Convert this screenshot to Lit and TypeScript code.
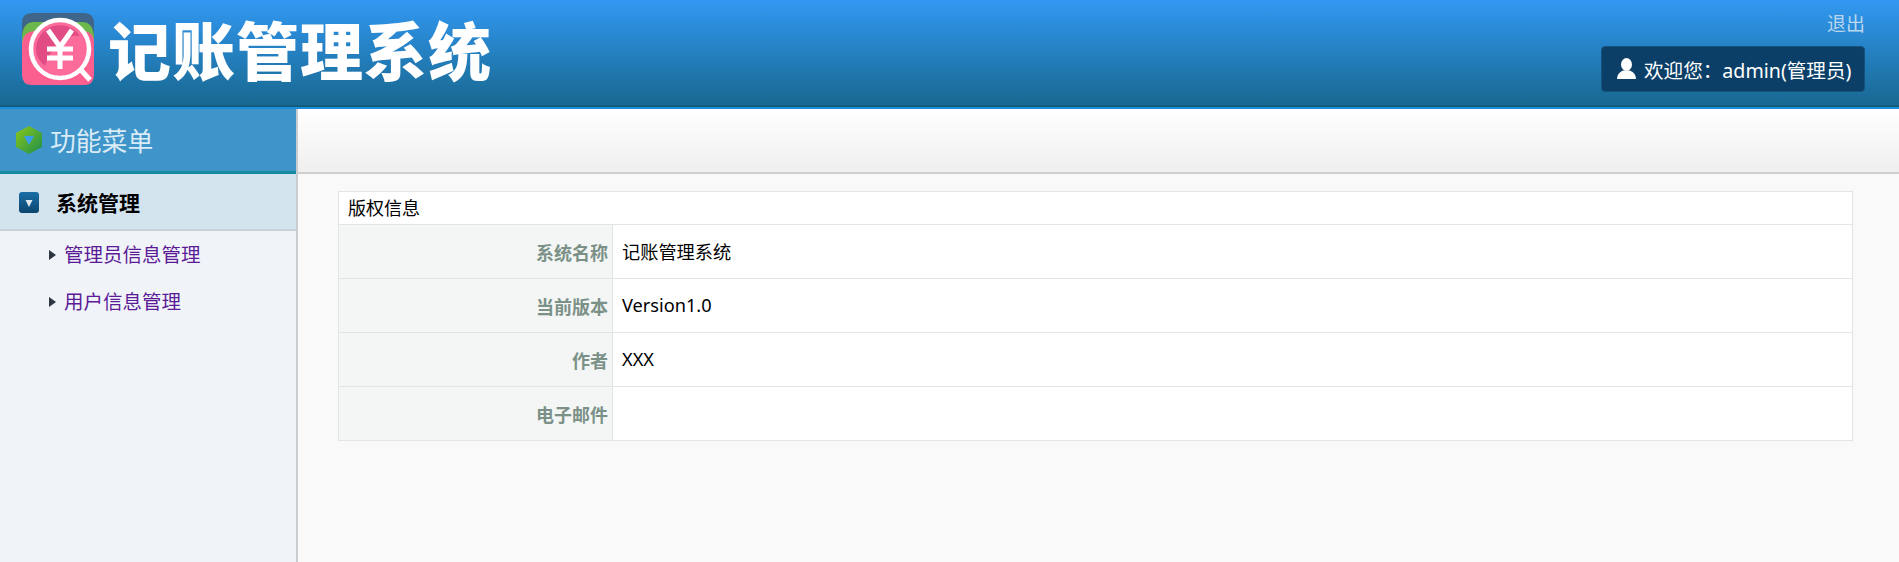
import { LitElement, html, css } from "lit";
import { customElement } from "lit/decorators.js";

@customElement("app-root")
export class AppRoot extends LitElement {
  static styles = css`
    :host { display: flex; flex-direction: column; width: 1899px; height: 562px; overflow: hidden; background: #f9f9f9;
      font-family: "Noto Sans", "Noto Sans CJK SC", sans-serif; color: #000; }
    .top { height: 107px; flex: none; display: flex; justify-content: space-between; background: linear-gradient(#3298f2, #18688f); border-bottom: 1px solid #0f5a7c; box-shadow: inset 0 -1px 0 #145f82; box-sizing: border-box; }
    .brand { display: flex; align-items: flex-start; padding: 13px 0 0 22px; gap: 14px; }
    .brand svg { flex: none; }
    .title { font-family: "Noto Sans CJK SC", sans-serif; font-weight: 900; font-size: 63px; line-height: 72px; letter-spacing: 1px; color: #fff; white-space: nowrap; margin-top: -1px; }
    .user { display: flex; flex-direction: column; align-items: flex-end; padding: 11px 34px 0 0; }
    .logout { font-size: 19px; line-height: 26px; color: #b9d7ee; }
    .welcome { margin-top: 9px; height: 46px; box-sizing: border-box; width: 264px; display: flex; align-items: center; padding-left: 15px; gap: 8px; background: #0c3f67; border-radius: 4px; border: 1px solid #14527c; color: #fff; font-size: 19.6px; white-space: nowrap; }
    .line { height: 2px; flex: none; background: #1c8fdc; }
    .main { flex: 1; display: flex; min-height: 0; }
    .side { width: 298px; flex: none; box-sizing: border-box; border-right: 2px solid #c9cdd0; background: #f0f4f9; }
    .side-head { height: 65px; box-sizing: border-box; background: #3f95ca; border-bottom: 3px solid #14899f; display: flex; align-items: center; padding: 0 0 0 16px; gap: 8px; color: #d9ebf6; font-size: 25.8px; }
    .group { height: 57px; box-sizing: border-box; background: #d4e4ef; border-bottom: 2px solid #cbd2d7; display: flex; align-items: center; padding: 1px 0 0 19px; gap: 17px; font-weight: 700; font-size: 21px; }
    .menu { list-style: none; margin: 0; padding: 0; }
    .menu li { height: 47px; display: flex; align-items: center; padding-left: 49px; gap: 8px; color: #5b1a96; font-size: 19.5px; line-height: 24px; }
    .tri { width: 0; height: 0; border-left: 7px solid #2d3442; border-top: 5px solid transparent; border-bottom: 5px solid transparent; }
    .content { flex: 1; min-width: 0; display: flex; flex-direction: column; }
    .bar { height: 65px; flex: none; box-sizing: border-box; background: linear-gradient(#fff, #efefef); border-bottom: 2px solid #cfcfcf; }
    .body { padding: 17px 46px 0 40px; }
    table { width: 100%; border-collapse: collapse; table-layout: fixed; font-size: 18px; background: #fff; }
    td, th { border: 1px solid #dfe6e4; padding: 0 4px; height: 54px; box-sizing: border-box; }
    th.cap { height: 33px; text-align: left; font-weight: 400; padding-left: 9px; line-height: 30px; font-size: 18px; }
    .c1 { width: 274px; }
    .lab { text-align: right; background: #f3f6f5; color: #7b9187; font-weight: 700; font-size: 18px; }
    .val { padding: 0 4px 2px 9px; font-size: 18.2px; }
  `;

  private rows: [string, string][] = [
    ["系统名称", "记账管理系统"],
    ["当前版本", "Version1.0"],
    ["作者", "XXX"],
    ["电子邮件", ""],
  ];

  render() {
    return html`
      <div class="top">
        <div class="brand">
          <svg width="72" height="72" viewBox="0 0 72 72">
            <path d="M10 0H62Q72 0 72 10V30H0V10Q0 0 10 0Z" fill="#3f6589"/>
            <path d="M0 26Q0 9 12 9H60Q72 9 72 26V40H0Z" fill="#6cb84c"/>
            <path d="M0 33Q0 18 14 18H60Q72 18 72 30V62Q72 72 62 72H10Q0 72 0 62Z" fill="#fb5f8f"/>
            <circle cx="38" cy="36" r="29" fill="#fd6b9b"/>
            <path d="M14 36A24 24 0 0 1 58 23Q34 20 23 53Q14 46 14 36Z" fill="#e24c84"/>
            <circle cx="38" cy="36" r="29" fill="none" stroke="#fff" stroke-width="4.5"/>
            <path d="M59 57L68 67" stroke="#fff" stroke-width="5"/>
            <path d="M26 17L38 34L50 17M38 34V56M25 36H51M25 45H51" fill="none" stroke="#fff" stroke-width="5"/>
          </svg>
          <div class="title">记账管理系统</div>
        </div>
        <div class="user">
          <div class="logout">退出</div>
          <div class="welcome">
            <svg width="19" height="22" viewBox="0 0 19 22"><ellipse cx="9.5" cy="6.5" rx="5.5" ry="6.5" fill="#fff"/><path d="M0 21Q0 15 6 12.5H13Q19 15 19 21Z" fill="#fff"/></svg>
            <span>欢迎您：admin(管理员)</span>
          </div>
        </div>
      </div>
      <div class="line"></div>
      <div class="main">
        <div class="side">
          <div class="side-head">
            <svg width="26" height="28" viewBox="0 0 26 28">
              <defs><linearGradient id="h" x1="0" y1="0" x2="1" y2="1"><stop offset="0" stop-color="#8cc71c"/><stop offset="1" stop-color="#1c8f4a"/></linearGradient></defs>
              <path d="M13 0L26 7V21L13 28L0 21V7Z" fill="url(#h)"/>
              <path d="M8 10H18L13 19Z" fill="#3a9fe6"/>
            </svg>
            <span>功能菜单</span>
          </div>
          <div class="group">
            <svg width="20" height="21" viewBox="0 0 20 21">
              <defs><linearGradient id="g" x1="0" y1="0" x2="0" y2="1"><stop offset="0" stop-color="#1a6ea8"/><stop offset="1" stop-color="#0c466e"/></linearGradient></defs>
              <rect width="20" height="21" rx="3" fill="url(#g)"/>
              <path d="M6.5 8H13.5L10 15Z" fill="#dfe9f0"/>
            </svg>
            <span>系统管理</span>
          </div>
          <ul class="menu">
            <li><i class="tri"></i><span>管理员信息管理</span></li>
            <li><i class="tri"></i><span>用户信息管理</span></li>
          </ul>
        </div>
        <div class="content">
          <div class="bar"></div>
          <div class="body">
            <table>
              <colgroup><col class="c1" /><col /></colgroup>
              <tr><th class="cap" colspan="2">版权信息</th></tr>
              ${this.rows.map(
                ([k, v]) => html`<tr><td class="lab">${k}</td><td class="val">${v}</td></tr>`
              )}
            </table>
          </div>
        </div>
      </div>
    `;
  }
}
